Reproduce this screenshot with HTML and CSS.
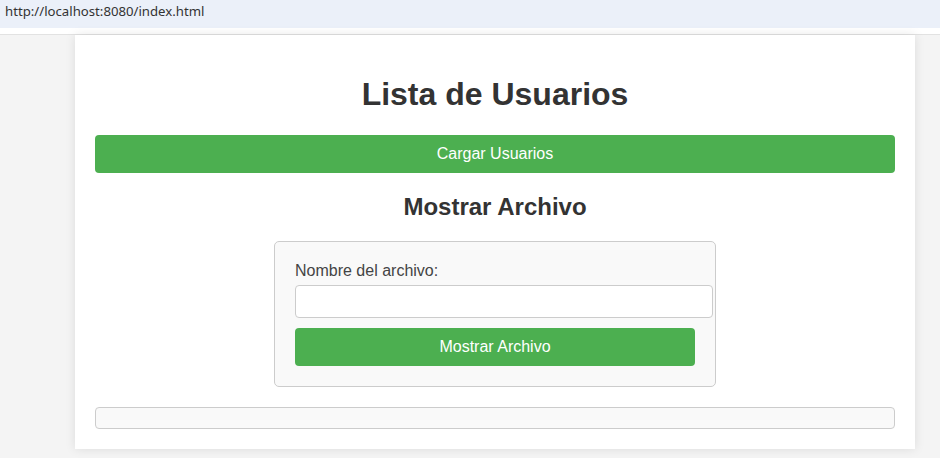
FILE: index.html
```html
<!DOCTYPE html>
<html lang="es">
<head>
<meta charset="utf-8">
<title>Lista de Usuarios</title>
<link rel="stylesheet" href="styles.css">
</head>
<body>
<div class="urlbar"><span class="url">http://localhost:8080/index.html</span></div>
<div class="strip"></div>
<div class="page">
  <div class="container">
    <h1>Lista de Usuarios</h1>
    <button class="btn">Cargar Usuarios</button>
    <h2>Mostrar Archivo</h2>
    <form class="file-form">
      <label for="fname">Nombre del archivo:</label>
      <input type="text" id="fname">
      <button type="button" class="btn">Mostrar Archivo</button>
    </form>
    <div class="output"></div>
  </div>
</div>
</body>
</html>
```
FILE: styles.css
```css
html, body {
  margin: 0;
  padding: 0;
  background: #f4f4f4;
  font-family: "Liberation Sans", Arial, sans-serif;
  height: 100%;
  overflow: hidden;
}
.urlbar {
  height: 28px;
  background: #ebf0f9;
  display: flex;
  align-items: center;
  padding-left: 5px;
}
.url {
  font-family: "Noto Sans", "DejaVu Sans", sans-serif;
  font-size: 13.2px;
  color: #333;
  position: relative;
  top: -3px;
}
.strip {
  height: 6px;
  background: #fff;
  border-bottom: 1px solid #e2e2e2;
}
.page {
  padding-left: 75px;
}
.container {
  width: 800px;
  padding: 20px;
  background: #fff;
  box-shadow: 0 0 10px rgba(0,0,0,0.1);
}
h1 {
  text-align: center;
  color: #333;
  font-size: 32px;
  margin: 21px 0 22px;
}
h2 {
  text-align: center;
  color: #333;
  font-size: 24px;
  margin: 20px 0 20px;
}
.btn {
  display: block;
  width: 100%;
  background: #4caf50;
  color: #fff;
  border: none;
  border-radius: 4px;
  padding: 10px;
  font-family: "Liberation Sans", Arial, sans-serif;
  font-size: 16px;
  line-height: 18px;
}
.file-form {
  width: 400px;
  margin: 0 auto;
  padding: 20px;
  background: #f9f9f9;
  border: 1px solid #ccc;
  border-radius: 5px;
}
.file-form label {
  display: block;
  font-size: 16px;
  line-height: 18px;
  color: #444;
  margin-bottom: 5px;
}
.file-form input {
  display: block;
  padding: 8px;
  border: 1px solid #ccc;
  border-radius: 4px;
  font-size: 13px;
  line-height: 15px;
  height: 33px;
  box-sizing: border-box;
  width: 418px;
  margin-bottom: 10px;
  background: #fff;
}
.output {
  margin-top: 20px;
  height: 20px;
  background: #f9f9f9;
  border: 1px solid #ccc;
  border-radius: 4px;
}
```
